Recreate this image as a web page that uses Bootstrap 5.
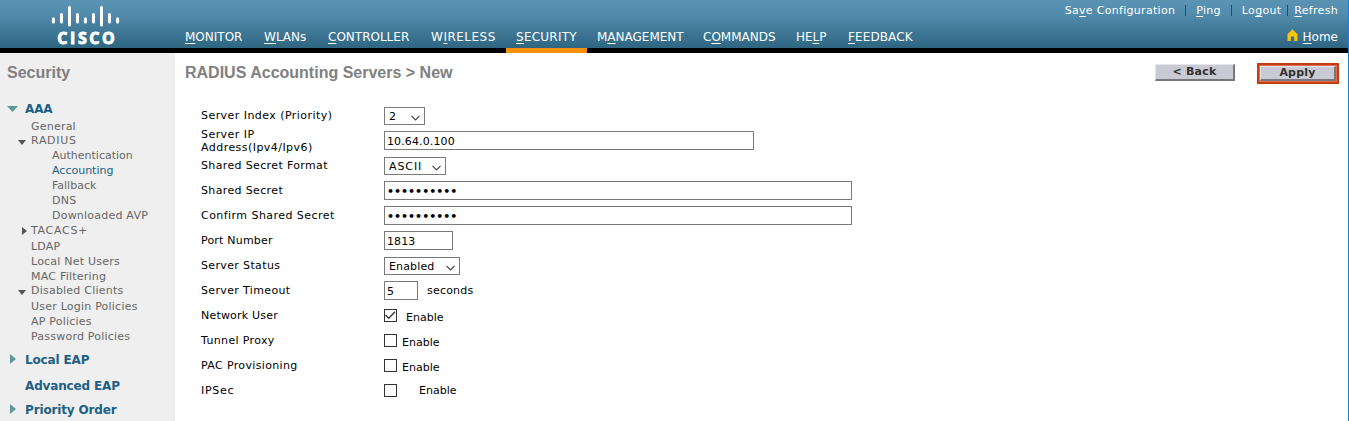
<!DOCTYPE html>
<html lang="en">
<head>
<meta charset="utf-8">
<meta name="viewport" content="width=device-width, initial-scale=1">
<title>RADIUS Accounting Servers</title>
<link href="https://cdn.jsdelivr.net/npm/bootstrap@5.3.0/dist/css/bootstrap.min.css" rel="stylesheet">
<style>
body{font-family:"DejaVu Sans",sans-serif;font-size:11px;line-height:13px;color:#000;background:#fff;height:421px;overflow:hidden}
.shell{height:421px;border-right:1px solid #1b7fd6}
.topbar{height:53px;background:linear-gradient(#5b93b3 0,#548dae 12px,#2e6682 48px,#000 48px)}
.logo-box{width:175px;flex:none}
.logo-box svg{display:block}
.mainnav{height:53px}
.mainnav a{color:#fff;font-size:12px;line-height:16px;padding:29px 10px 0;height:53px;text-decoration:none;white-space:nowrap;border-bottom:5px solid transparent;flex:none}
.mainnav a.active{border-color:#f7900a}
.mainnav u,.quick u{text-underline-offset:2px;text-decoration-thickness:1px}
.quick{color:#fff;width:320px;padding:4px 10px 0 0}
.quick a{color:#fff;text-decoration:none}
.quick .tools{letter-spacing:.3px}
.quick .tools i{width:1px;height:11px;background:#24486f;margin-top:1px}
.home-link{font-size:12px;line-height:16px;margin-top:12px;gap:5px}
.side{width:175px;flex:none;background:#efefef;color:#666;height:368px}
.ttl{font-family:"Liberation Sans",Arial,sans-serif;font-weight:700;font-size:16px;line-height:20px;color:#808080;white-space:nowrap}
.side .ttl{margin:10px 0 15px 7px}
.side .it{height:15px;padding-left:31px;display:flex;align-items:center;position:relative;white-space:nowrap;letter-spacing:.22px}
.side .sub{padding-left:52px}
.side .wide{letter-spacing:.7px}
.side .even{letter-spacing:0}
.side .hd{font-weight:700;font-size:12px;color:#205f86;padding-left:25px;height:18px;letter-spacing:-.15px}
.side svg{position:absolute}
.frm{padding:20px 0 0 16px}
.frm .ln{height:25px;display:flex;align-items:flex-start}
.frm .lb{width:183px;flex:none;padding-top:6px;white-space:nowrap;letter-spacing:.36px}
.frm .lb.t1{letter-spacing:.2px}
.frm .lb.t2{letter-spacing:.45px}
.frm .lb.t3{letter-spacing:.7px}
.frm .form-control,.frm .form-select{font-size:11px;line-height:13px;border:1px solid #7a7a7a;border-radius:0;color:#000;min-height:0;flex:none;background-color:#fff}
.frm .form-control{height:19px;padding:3px 2px 1px 2px;margin-top:3px;letter-spacing:.12px}
.frm .form-control[type=password]{font-weight:700;letter-spacing:0}
.frm .form-select{height:18px;padding:2px 0 2px 4px;margin-top:4px;letter-spacing:.15px;background-image:url("data:image/svg+xml,%3Csvg xmlns='http://www.w3.org/2000/svg' width='9' height='6'%3E%3Cpath d='M.5.8l4 4 4-4' fill='none' stroke='%23444' stroke-width='1.2'/%3E%3C/svg%3E");background-size:9px 6px;background-position:right 4px top 7px}
.frm .form-check-input{width:13px;height:13px;border:1px solid #333;border-radius:0;margin:6px 0 0;flex:none;background-size:13px 13px}
.frm .form-check-input:checked{background-color:#fff;border-color:#333;background-image:url("data:image/svg+xml,%3Csvg xmlns='http://www.w3.org/2000/svg' viewBox='0 0 13 13'%3E%3Cpath d='M1.5 6l3.3 3.3L11 2.8' fill='none' stroke='%23333' stroke-width='1.3'/%3E%3C/svg%3E")}
.frm .en{padding-top:8px}
.cbtn{border-radius:0;border:1px solid;border-color:#e4e4ea #77777d #77777d #e4e4ea;border-width:1px 2px 2px 1px;background:#cacad4;color:#303030;font-weight:700;font-size:11px;line-height:12px;letter-spacing:.2px;padding:1px 0;width:80px;height:17px;margin-top:1px}
.hot{border:2px solid #c43c12;background:#e07050;padding:1px}
.hot .cbtn{width:76px;height:15px;padding:0;display:block;margin:0}
.acts{gap:22px;padding:10px 9px 0 0}
</style>
</head>
<body>
<div class="shell">
<header class="topbar d-flex">
  <div class="logo-box">
    <svg width="175" height="48" viewBox="0 0 175 48">
      <g stroke="#fff" stroke-width="3" stroke-linecap="round"><path d="M53.4 18.7v3.2M61.5 14.6v7.3M69.5 7.6v17.4M77.5 14.6v7.3M85.4 18.7v3.2M93.5 14.6v7.3M101.5 7.6v17.4M109.5 14.6v7.3M117.6 18.7v3.2"/></g>
      <text x="57.3" y="43.7" fill="#fff" stroke="#fff" stroke-width=".9" font-family="Open Sans, sans-serif" font-weight="700" font-size="16" textLength="57.5">CISCO</text>
    </svg>
  </div>
  <nav class="mainnav d-flex">
    <a href="#" style="width:79px"><u>M</u>ONITOR</a><a href="#" style="width:64px"><u>W</u>LANs</a><a href="#" style="width:103px"><u>C</u>ONTROLLER</a><a href="#" style="width:85px;letter-spacing:.5px">W<u>I</u>RELESS</a><a href="#" class="active" style="width:81px;letter-spacing:.25px"><u>S</u>ECURITY</a><a href="#" style="width:106px">M<u>A</u>NAGEMENT</a><a href="#" style="width:93px">C<u>O</u>MMANDS</a><a href="#" style="width:52px">HE<u>L</u>P</a><a href="#" style="width:85px;letter-spacing:.1px"><u>F</u>EEDBACK</a>
  </nav>
  <div class="quick ms-auto">
    <div class="tools d-flex justify-content-end"><a href="#">Sa<u>v</u>e Configuration</a><i style="margin-left:10px;margin-right:10px"></i><a href="#"><u>P</u>ing</a><i style="margin-left:10px;margin-right:10px"></i><a href="#">Lo<u>g</u>out</a><i style="margin-left:6px;margin-right:6px"></i><a href="#"><u>R</u>efresh</a></div>
    <div class="home-link d-flex justify-content-end"><svg width="11" height="13" viewBox="0 0 11 13"><path d="M5.5.3L.5 5.2V11.5q0 .5.5.5H3.8V8.2q1.6-2 3.4 0V12H10q.5 0 .5-.5V5.2z" fill="#f5c60a"/></svg><a href="#"><u>H</u>ome</a></div>
  </div>
</header>
<div class="d-flex">
  <aside class="side">
    <div class="ttl">Security</div>
    <div class="it hd" style="height:21px;padding-top:1px"><svg style="left:7px;top:8px" width="11" height="6"><path d="M0 0h11L5.5 6z" fill="#5f9696"/></svg>AAA</div>
    <div class="it" style="height:14px">General</div>
    <div class="it wide"><svg style="left:18px;top:7px" width="8" height="5"><path d="M0 0h8L4 5z" fill="#555"/></svg>RADIUS</div>
    <div class="it sub even">Authentication</div>
    <div class="it sub even" style="color:#205f86">Accounting</div>
    <div class="it sub even">Fallback</div>
    <div class="it sub">DNS</div>
    <div class="it sub">Downloaded AVP</div>
    <div class="it wide"><svg style="left:22px;top:4px" width="5" height="8"><path d="M0 0v8l5-4z" fill="#555"/></svg>TACACS+</div>
    <div class="it" style="height:16px">LDAP</div>
    <div class="it">Local Net Users</div>
    <div class="it" style="height:14px">MAC Filtering</div>
    <div class="it"><svg style="left:18px;top:7px" width="8" height="5"><path d="M0 0h8L4 5z" fill="#555"/></svg>Disabled Clients</div>
    <div class="it" style="height:16px">User Login Policies</div>
    <div class="it">AP Policies</div>
    <div class="it">Password Policies</div>
    <div class="it hd" style="margin-top:7px"><svg style="left:10px;top:3px" width="6" height="10"><path d="M0 0v10l6-5z" fill="#5f9696"/></svg>Local EAP</div>
    <div class="it hd" style="margin-top:8px">Advanced EAP</div>
    <div class="it hd" style="margin-top:6px"><svg style="left:10px;top:3px" width="6" height="10"><path d="M0 0v10l6-5z" fill="#5f9696"/></svg>Priority Order</div>
  </aside>
  <main class="flex-grow-1">
    <div class="d-flex justify-content-between align-items-start" style="height:30px">
      <div class="ttl" style="margin:10px 0 0 10px">RADIUS Accounting Servers &gt; New</div>
      <div class="acts d-flex"><button class="cbtn">&lt; Back</button><div class="hot"><button class="cbtn">Apply</button></div></div>
    </div>
    <form class="frm" style="margin-left:10px">
      <div class="ln"><label class="lb t2">Server Index (Priority)</label><select class="form-select" style="width:41px"><option>2</option></select></div>
      <div class="ln"><label class="lb t2" style="padding-top:0">Server IP<br>Address(Ipv4/Ipv6)</label><input class="form-control" style="width:370px" value="10.64.0.100"></div>
      <div class="ln"><label class="lb">Shared Secret Format</label><select class="form-select" style="width:62px;letter-spacing:.9px"><option>ASCII</option></select></div>
      <div class="ln"><label class="lb">Shared Secret</label><input type="password" class="form-control" style="width:468px" value="0123456789"></div>
      <div class="ln"><label class="lb t2">Confirm Shared Secret</label><input type="password" class="form-control" style="width:468px" value="0123456789"></div>
      <div class="ln"><label class="lb t1">Port Number</label><input class="form-control" style="width:69px" value="1813"></div>
      <div class="ln"><label class="lb">Server Status</label><select class="form-select" style="width:76px"><option>Enabled</option></select></div>
      <div class="ln"><label class="lb">Server Timeout</label><input class="form-control" style="width:34px" value="5"><span style="padding:6px 0 0 9px;letter-spacing:.2px">seconds</span></div>
      <div class="ln"><label class="lb t1">Network User</label><input type="checkbox" class="form-check-input" checked><span class="en" style="margin-left:9px">Enable</span></div>
      <div class="ln"><label class="lb">Tunnel Proxy</label><input type="checkbox" class="form-check-input"><span class="en" style="margin-left:5px">Enable</span></div>
      <div class="ln"><label class="lb">PAC Provisioning</label><input type="checkbox" class="form-check-input"><span class="en" style="margin-left:5px">Enable</span></div>
      <div class="ln"><label class="lb t3">IPSec</label><input type="checkbox" class="form-check-input"><span class="en" style="margin-left:22px;padding-top:6px">Enable</span></div>
    </form>
  </main>
</div>
</div>
<script src="https://cdn.jsdelivr.net/npm/bootstrap@5.3.0/dist/js/bootstrap.bundle.min.js"></script>
</body>
</html>
